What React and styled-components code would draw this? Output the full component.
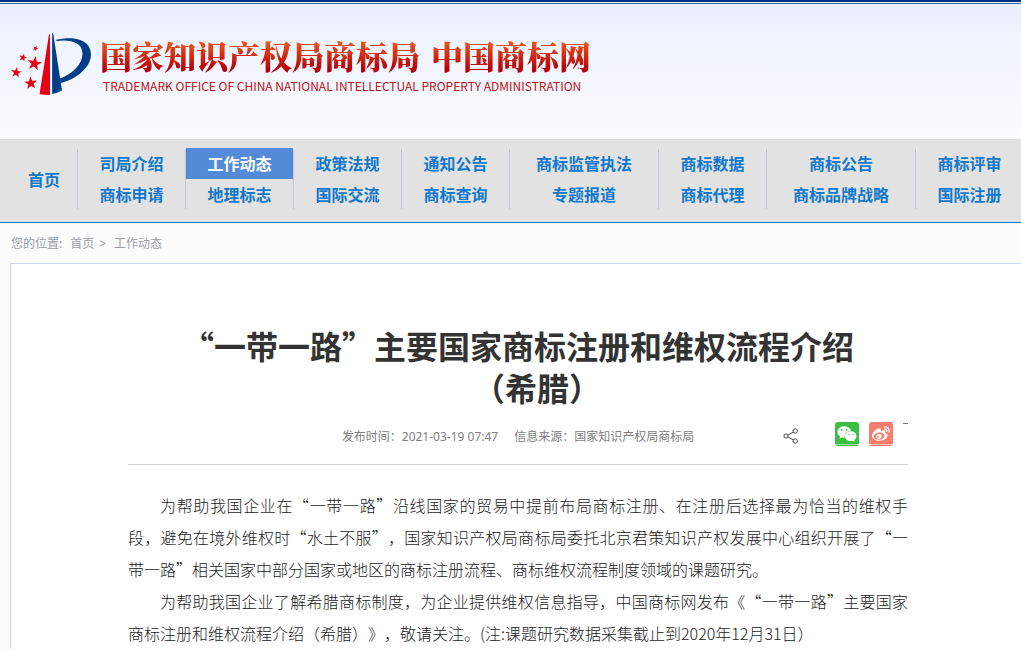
import styled, { createGlobalStyle } from "styled-components";
import { FaWeixin, FaWeibo } from "react-icons/fa";

const GlobalStyle = createGlobalStyle`
  body {
    margin: 0;
    background-color: #fcfcfc;
    font-family: "Noto Sans", "Noto Sans CJK SC", sans-serif;
    font-size: 12px;
    color: #333;
    text-spacing-trim: space-all;
    overflow-x: hidden;
  }
  a {
    color: inherit;
    text-decoration: none;
  }
`;

const TopLine = styled.div`
  height: 2px;
  border-bottom: 1px solid #fff;
  background-color: #04307c;
`;

const Banner = styled.header`
  display: flex;
  align-items: flex-start;
  gap: 8px;
  height: 136px;
  padding: 28px 0 0 10px;
  box-sizing: border-box;
  border-top: 1px solid #3a61a4;
  background: linear-gradient(#e9effc, #fdfdff);
`;

const Emblem = styled.svg`
  width: 82px;
  height: 64px;
  flex-shrink: 0;
`;

const BannerText = styled.div`
  padding-top: 5px;
`;

const SiteName = styled.h1`
  display: flex;
  gap: 11px;
  margin: 0;
  font-family: "Noto Serif CJK SC", "Noto Sans CJK SC", serif;
  font-size: 32px;
  font-weight: 900;
  line-height: 36px;
  white-space: nowrap;
  color: transparent;
  background: linear-gradient(#ee5a1c 10%, #b5000c 90%);
  background-clip: text;
`;

const SiteNameEn = styled.p`
  margin: 0;
  padding: 4px 0 0 3px;
  font-family: "Noto Sans CJK SC", "Liberation Sans", sans-serif;
  font-size: 12px;
  line-height: 18px;
  white-space: nowrap;
  color: #bd1016;
`;

const Nav = styled.nav`
  display: flex;
  align-items: center;
  height: 83px;
  border-bottom: 1px solid #1379c8;
  background-color: #e2e2e2;
  overflow: hidden;
`;

const NavGroup = styled.div`
  display: flex;
  flex-direction: column;
  flex-shrink: 0;
  width: ${props => props.$width}px;
  margin-bottom: 3px;
`;

const NavDivider = styled.span`
  flex-shrink: 0;
  width: 1px;
  height: 60px;
  margin-bottom: 3px;
  background-color: #c5c5d6;
`;

const NavLink = styled.a`
  font-family: "Noto Sans CJK SC", sans-serif;
  font-size: 16px;
  font-weight: 700;
  line-height: 31px;
  text-align: center;
  && {
    color: ${props => props.$active ? "#fff" : "#1279cc"};
  }
  background-color: ${props => props.$active ? "#548bd9" : "transparent"};
`;

const HomeLink = styled(NavLink)`
  padding-left: 11px;
  line-height: 30px;
`;

const Breadcrumb = styled.div`
  display: flex;
  gap: 8px;
  padding: 2px 11px 0;
  line-height: 38px;
  color: #999ea6;
`;

const Crumbs = styled.span`
  display: flex;
  gap: 5px;
  a:last-child {
    margin-left: 3px;
  }
`;

const Panel = styled.main`
  margin-left: 10px;
  padding: 60px 113px 0 117px;
  border: solid #cdd8e9;
  border-width: 1px 0 0 1px;
  background-color: #fff;
`;

const Title = styled.h2`
  margin: 0;
  font-family: "Noto Sans CJK SC", sans-serif;
  font-size: 32px;
  font-weight: 700;
  line-height: 42px;
  text-align: center;
`;

const Country = styled.span`
  display: block;
  padding-left: 38px;
`;

const Meta = styled.div`
  display: grid;
  grid-template-columns: 1fr auto 1fr;
  align-items: center;
  padding: 14px 0 18px;
  border-bottom: 1px solid #d3d3d3;
  color: #808080;
`;

const MetaText = styled.p`
  display: flex;
  gap: 16px;
  grid-column: 2;
  margin: 0;
  padding-top: 6px;
  line-height: 18px;
`;

const Share = styled.div`
  display: flex;
  align-items: center;
  justify-content: flex-end;
  gap: 10px;
`;

const ShareIcon = styled.svg`
  width: 16px;
  height: 16px;
  margin-right: 26px;
  padding-top: 4px;
`;

const ShareButton = styled.button`
  display: flex;
  align-items: center;
  justify-content: center;
  width: 24px;
  height: 24px;
  padding: 0;
  border: none;
  border-radius: 3px;
  color: #fff;
  background: linear-gradient(transparent 22px, rgba(255, 255, 255, 0.5) 22px 23px, transparent 23px) ${props => props.$color};
  cursor: pointer;
`;

const Dash = styled.span`
  align-self: flex-start;
  width: 5px;
  height: 1px;
  margin-top: 1px;
  background-color: #777;
`;

const Content = styled.article`
  padding-top: 24px;
  font-family: "Noto Sans CJK SC", sans-serif;
  font-size: 16px;
  font-weight: 300;
  line-height: 32px;
  text-align: justify;
  color: #1c1c1c;
  p {
    margin: 0;
    text-indent: 32px;
  }
`;

const menu = [
  { width: 107, links: ["司局介绍", "商标申请"] },
  { width: 107, links: ["工作动态", "地理标志"] },
  { width: 107, links: ["政策法规", "国际交流"] },
  { width: 107, links: ["通知公告", "商标查询"] },
  { width: 148, links: ["商标监管执法", "专题报道"] },
  { width: 107, links: ["商标数据", "商标代理"] },
  { width: 148, links: ["商标公告", "商标品牌战略"] },
  { width: 107, links: ["商标评审", "国际注册"] },
];

const stars = [
  { x: 34.5, y: 63.5, r: 7.6, turn: 10 },
  { x: 30.8, y: 83.2, r: 6.8, turn: -5 },
  { x: 16.2, y: 72.5, r: 5.6, turn: 8 },
  { x: 23, y: 57.6, r: 4.2, turn: 15 },
  { x: 35.5, y: 48.4, r: 2.8, turn: 25 },
];

function starPoints({ x, y, r, turn }) {
  return Array.from({ length: 10 }, (_, i) => {
    const a = ((i * 36 - 90 + turn) * Math.PI) / 180;
    const d = i % 2 ? r * 0.4 : r;
    return `${(x + d * Math.cos(a)).toFixed(2)},${(y + d * Math.sin(a)).toFixed(2)}`;
  }).join(" ");
}

function Logo() {
  return (
    <Emblem viewBox="10 32 82 64" aria-hidden="true">
      {stars.map(star => <polygon key={star.x} points={starPoints(star)} fill="#e60012"/>)}
      <path d="M49 34.5L50 34V95Q44 95 39.5 94.3Z" fill="#e60012"/>
      <path d="M52.1 33.2L53.2 33.5L62 90.5Q57.5 93 52.1 94Z" fill="#003f88"/>
      <path d="M56 39.8C74 35.5 91 39.5 91 54.5C91 67.5 76 79.5 60.5 83L60 78.6C73 73.5 82.5 64 82.5 53.5C82.5 42 70 39.2 56.5 41Z" fill="#003f88"/>
    </Emblem>
  );
}

export default function App() {
  return (
    <div lang="zh-CN">
      <GlobalStyle/>
      <TopLine/>
      <Banner>
        <Logo/>
        <BannerText>
          <SiteName><span>国家知识产权局商标局</span><span>中国商标网</span></SiteName>
          <SiteNameEn>TRADEMARK OFFICE OF CHINA NATIONAL INTELLECTUAL PROPERTY ADMINISTRATION</SiteNameEn>
        </BannerText>
      </Banner>
      <Nav>
        <NavGroup $width={77}>
          <HomeLink href="#">首页</HomeLink>
        </NavGroup>
        {menu.map(({ width, links }) => [
          <NavDivider key={links[0] + "-line"}/>,
          <NavGroup key={links[0]} $width={width}>
            {links.map(text => (
              <NavLink key={text} href="#" $active={text === "工作动态"}>{text}</NavLink>
            ))}
          </NavGroup>
        ])}
      </Nav>
      <Breadcrumb>
        <span>您的位置:</span>
        <Crumbs>
          <a href="#">首页</a>
          <span>&gt;</span>
          <a href="#">工作动态</a>
        </Crumbs>
      </Breadcrumb>
      <Panel>
        <Title>
          “一带一路”主要国家商标注册和维权流程介绍
          <Country>（希腊）</Country>
        </Title>
        <Meta>
          <MetaText>
            <span>发布时间：2021-03-19 07:47</span>
            <span>信息来源：国家知识产权局商标局</span>
          </MetaText>
          <Share>
            <ShareIcon viewBox="0 0 16 16" fill="none" stroke="#444" strokeWidth="1">
              <circle cx="3" cy="8" r="2.1"/>
              <circle cx="12.2" cy="3" r="2.2"/>
              <circle cx="12.2" cy="13" r="2.2"/>
              <path d="M5 7L10.2 4.2M5 9L10.2 11.8"/>
            </ShareIcon>
            <ShareButton $color="#3bbf42" aria-label="微信"><FaWeixin size={20}/></ShareButton>
            <ShareButton $color="#f77c6c" aria-label="微博"><FaWeibo size={18}/></ShareButton>
            <Dash/>
          </Share>
        </Meta>
        <Content>
          <p>为帮助我国企业在“一带一路”沿线国家的贸易中提前布局商标注册、在注册后选择最为恰当的维权手段，避免在境外维权时“水土不服”，国家知识产权局商标局委托北京君策知识产权发展中心组织开展了“一带一路”相关国家中部分国家或地区的商标注册流程、商标维权流程制度领域的课题研究。</p>
          <p>为帮助我国企业了解希腊商标制度，为企业提供维权信息指导，中国商标网发布《“一带一路”主要国家商标注册和维权流程介绍（希腊）》，敬请关注。(注:课题研究数据采集截止到2020年12月31日）</p>
        </Content>
      </Panel>
    </div>
  );
}
